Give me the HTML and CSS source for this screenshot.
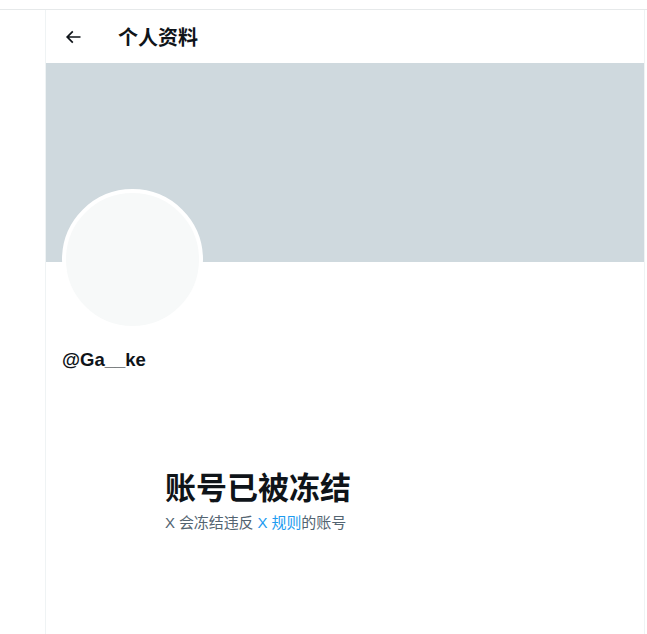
FILE: index.html
```html
<!DOCTYPE html>
<html lang="zh-CN">
<head>
<meta charset="utf-8">
<title>个人资料</title>
<link rel="stylesheet" href="styles.css">
</head>
<body>
<div class="topbar"></div>
<main class="column">
  <header class="header">
    <span class="back">
      <svg viewBox="0 0 24 24" width="20" height="20"><path d="M7.414 13l5.043 5.04-1.414 1.42L3.586 12l7.457-7.46 1.414 1.42L7.414 11H21v2H7.414z" fill="#0f1419"/></svg>
    </span>
    <h1 class="title">个人资料</h1>
  </header>
  <div class="banner"></div>
  <div class="profile">
    <div class="avatar"></div>
    <div class="handle">@Ga__ke</div>
  </div>
  <section class="frozen">
    <h2 class="frozen-title">账号已被冻结</h2>
    <p class="frozen-text">X 会冻结违反 <a class="link" href="#">X 规则</a>的账号</p>
  </section>
</main>
</body>
</html>
```
FILE: styles.css
```css
html, body {
  margin: 0;
  padding: 0;
  background: #ffffff;
  font-family: "Liberation Sans", "Noto Sans CJK SC", sans-serif;
  color: #0f1419;
}
.topbar {
  height: 9px;
  border-bottom: 1px solid #e6e9ea;
}
.column {
  margin-left: 45px;
  width: 598px;
  min-height: 624px;
  border-left: 1px solid #eff3f4;
  border-right: 1px solid #eff3f4;
}
.header {
  height: 53px;
  display: flex;
  align-items: center;
  padding-left: 16px;
}
.back {
  width: 22px;
  height: 22px;
  display: flex;
  align-items: center;
  justify-content: center;
  margin-right: 34px;
}
.title {
  margin: 0;
  font-size: 20px;
  font-weight: 700;
  font-family: "Noto Sans CJK SC", sans-serif;
  line-height: 24px;
}
.banner {
  height: 199px;
  background: #cfd9de;
}
.profile {
  padding-left: 16px;
}
.avatar {
  width: 133px;
  height: 133px;
  border-radius: 50%;
  border: 4px solid #ffffff;
  background: #f7f9f9;
  margin-top: -73px;
}
.handle {
  margin-top: 18px;
  font-size: 18.5px;
  font-weight: 700;
  line-height: 24px;
}
.frozen {
  padding-left: 119px;
  padding-top: 96px;
}
.frozen-title {
  margin: 0;
  font-family: "Noto Sans CJK SC", sans-serif;
  font-size: 31px;
  font-weight: 700;
  line-height: 36px;
}
.frozen-text {
  margin: 9px 0 0;
  font-size: 15px;
  line-height: 20px;
  color: #536471;
  letter-spacing: -0.1px;
}
.link {
  color: #1d9bf0;
  text-decoration: none;
}
```
